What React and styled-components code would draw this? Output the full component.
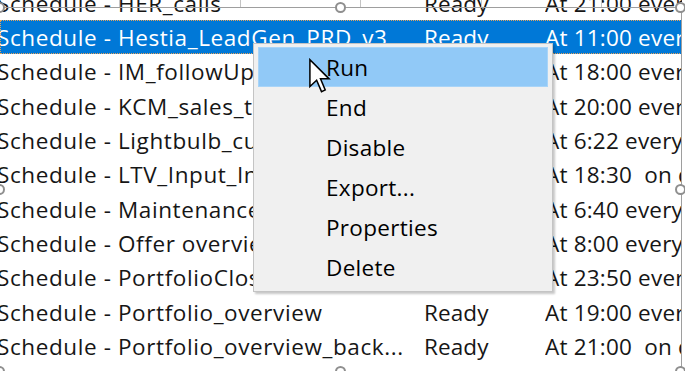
import React from 'react';
import styled, { createGlobalStyle } from 'styled-components';

const GlobalStyle = createGlobalStyle`
    html, body {
        margin: 0;
        padding: 0;
        background: #ffffff;
        overflow: hidden;
    }
    body {
        font-family: "Open Sans", "Noto Sans", "Liberation Sans", sans-serif;
    }
`;

const tasks = [
    { name: 'Schedule - HER_calls', status: 'Ready', trigger: 'At 21:00 every day' },
    { name: 'Schedule - Hestia_LeadGen_PRD_v3', status: 'Ready', trigger: 'At 11:00 every day', selected: true },
    { name: 'Schedule - IM_followUp_daily', status: 'Ready', trigger: 'At 18:00 every day' },
    { name: 'Schedule - KCM_sales_tracker', status: 'Ready', trigger: 'At 20:00 every day' },
    { name: 'Schedule - Lightbulb_customers', status: 'Ready', trigger: 'At 6:22 every day' },
    { name: 'Schedule - LTV_Input_Integration', status: 'Ready', trigger: 'At 18:30  on day 1' },
    { name: 'Schedule - Maintenance_jobs', status: 'Ready', trigger: 'At 6:40 every day' },
    { name: 'Schedule - Offer overview', status: 'Ready', trigger: 'At 8:00 every day' },
    { name: 'Schedule - PortfolioCloseout', status: 'Ready', trigger: 'At 23:50 every day' },
    { name: 'Schedule - Portfolio_overview', status: 'Ready', trigger: 'At 19:00 every day' },
    { name: 'Schedule - Portfolio_overview_back...', status: 'Ready', trigger: 'At 21:00  on day 1' },
];

const menuItems = ['Run', 'End', 'Disable', 'Export...', 'Properties', 'Delete'];

const handles = [
    { x: 0, y: 0 }, { x: 50, y: 0 }, { x: 100, y: 0 },
    { x: 0, y: 50 }, { x: 100, y: 50 },
    { x: 0, y: 100 }, { x: 50, y: 100 }, { x: 100, y: 100 },
];

const App = () => {
    return (
        <>
            <GlobalStyle />
            <Canvas>
                <List>
                    {tasks.map(task => (
                        <Row key={task.name} selected={task.selected}>
                            <NameCell>{task.name}</NameCell>
                            <StatusCell>{task.status}</StatusCell>
                            <TriggerCell>{task.trigger}</TriggerCell>
                        </Row>
                    ))}
                </List>

                <Ticks>
                    {[0, 1, 2, 3, 4].map(i => <Tick key={i} />)}
                </Ticks>

                <Frame>
                    {handles.map((h, i) => (
                        <Handle key={i} style={{ left: `${h.x}%`, top: `${h.y}%` }} />
                    ))}
                </Frame>

                <Menu>
                    {menuItems.map((item, i) => (
                        <MenuItem key={item} active={i === 0}>{item}</MenuItem>
                    ))}
                </Menu>

                <Cursor width="24" height="37" viewBox="0 0 14 22">
                    <path
                        d="M1 1 L1 17 L5 13.2 L7.9 20 L10.1 19 L7.3 12.4 L12.4 12.4 Z"
                        fill="#ffffff"
                        stroke="#000000"
                        strokeWidth="0.9"
                        strokeLinejoin="miter"
                    />
                </Cursor>
            </Canvas>
        </>
    );
};

const Canvas = styled.div`
    position: relative;
    width: 685px;
    height: 371px;
    overflow: hidden;
    background: #ffffff;
`;

const List = styled.div`
    width: 682px;
    margin-top: -14.3px;
    overflow: hidden;
    display: flex;
    flex-direction: column;
`;

const Row = styled.div`
    display: grid;
    grid-template-columns: 424px 121px 1fr;
    height: 34.3px;
    align-items: center;
    padding-top: 2px;
    box-sizing: border-box;
    font-size: 22.5px;
    letter-spacing: 0.6px;
    color: ${p => (p.selected ? '#ffffff' : '#161616')};
    background: ${p => (p.selected ? '#0078d7' : 'transparent')};
    outline: ${p => (p.selected ? '1px dotted #e8a35a' : 'none')};
    outline-offset: -1px;
`;

const Cell = styled.div`
    white-space: pre;
    overflow: hidden;
    line-height: 30px;
`;

const NameCell = styled(Cell)`
    margin-left: -3px;
    text-overflow: clip;
`;

const StatusCell = styled(Cell)`
    letter-spacing: 0.1px;
`;

const TriggerCell = styled(Cell)`
    letter-spacing: 0.2px;
`;

const Ticks = styled.div`
    position: absolute;
    top: 0;
    left: 119px;
    display: flex;
    gap: 119.5px;
`;

const Tick = styled.div`
    width: 1px;
    height: 7px;
    background: #c4c4c4;
`;

const Frame = styled.div`
    position: absolute;
    left: 0;
    top: 7px;
    width: 682px;
    height: 365px;
    box-sizing: border-box;
    border-top: 1.5px solid #9e9e9e;
    border-right: 1.5px solid #9e9e9e;
    pointer-events: none;
`;

const Handle = styled.div`
    position: absolute;
    width: 11px;
    height: 11px;
    margin: -6px 0 0 -6px;
    border-radius: 50%;
    border: 2px solid #8f8f8f;
    background: #ffffff;
    box-sizing: border-box;
`;

const Menu = styled.div`
    position: absolute;
    left: 253px;
    top: 43px;
    width: 300px;
    box-sizing: border-box;
    padding: 3px 4px 4px 4px;
    background: #f0f0f0;
    border: 1px solid #c4c4c4;
    box-shadow: 2px 2px 2px rgba(0, 0, 0, 0.22);
    display: flex;
    flex-direction: column;
`;

const MenuItem = styled.div`
    height: 40px;
    box-sizing: border-box;
    padding-left: 67px;
    display: flex;
    align-items: center;
    font-size: 22.5px;
    letter-spacing: 0.3px;
    color: #000000;
    background: ${p => (p.active ? '#91c9f7' : 'transparent')};
    border: 1px solid ${p => (p.active ? '#a8d4f8' : 'transparent')};
`;

const Cursor = styled.svg`
    position: absolute;
    left: 308px;
    top: 58px;
`;

export default App;
